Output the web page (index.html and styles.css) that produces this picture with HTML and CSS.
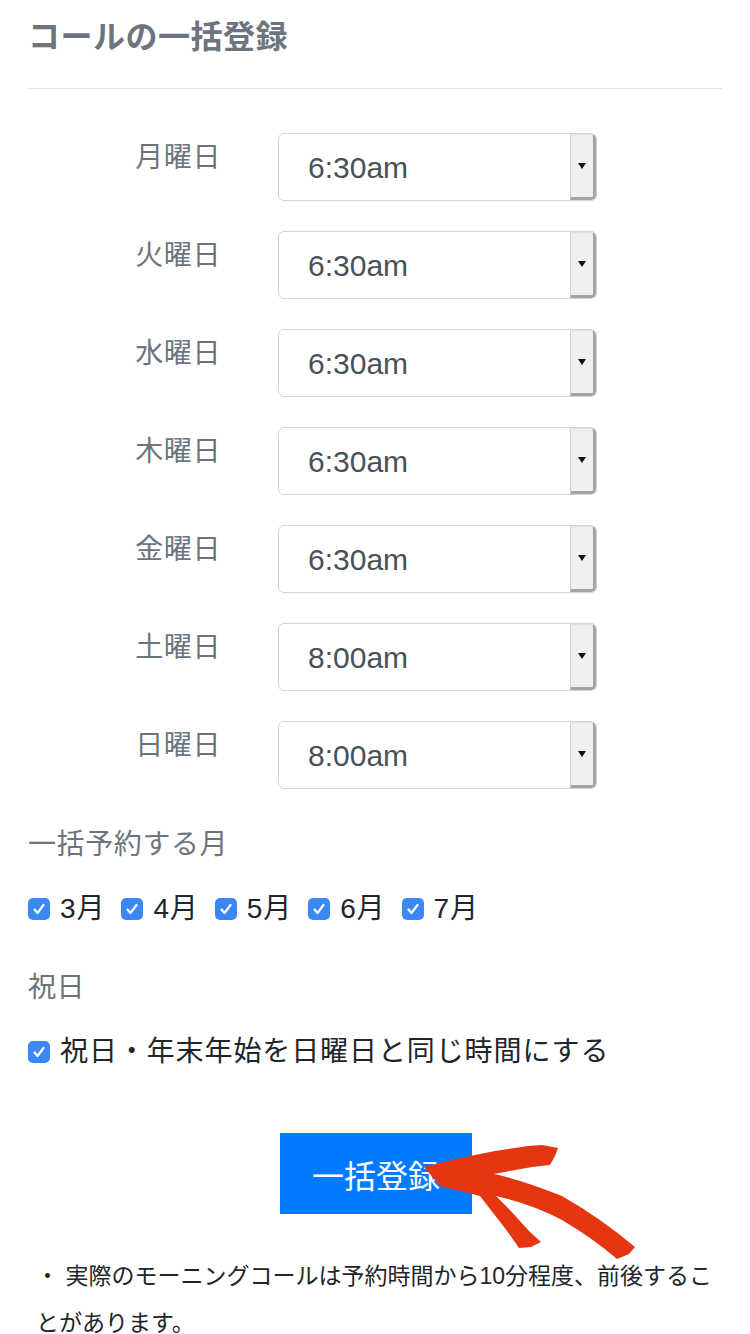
FILE: index.html
```html
<!DOCTYPE html>
<html lang="ja">
<head>
    <meta charset="UTF-8">
    <meta name="viewport" content="width=device-width, initial-scale=1.0">
    <title>コールの一括登録</title>
    <link rel="stylesheet" href="styles.css">
</head>
<body>
    <div class="page">
        <h1 class="title">コールの一括登録</h1>
        <hr class="divider">

        <div class="days">
            <div class="day-row">
                <label class="day-label">月曜日</label>
                <div class="select"><span class="select-value">6:30am</span><span class="select-btn"><i class="caret"></i></span></div>
            </div>
            <div class="day-row">
                <label class="day-label">火曜日</label>
                <div class="select"><span class="select-value">6:30am</span><span class="select-btn"><i class="caret"></i></span></div>
            </div>
            <div class="day-row">
                <label class="day-label">水曜日</label>
                <div class="select"><span class="select-value">6:30am</span><span class="select-btn"><i class="caret"></i></span></div>
            </div>
            <div class="day-row">
                <label class="day-label">木曜日</label>
                <div class="select"><span class="select-value">6:30am</span><span class="select-btn"><i class="caret"></i></span></div>
            </div>
            <div class="day-row">
                <label class="day-label">金曜日</label>
                <div class="select"><span class="select-value">6:30am</span><span class="select-btn"><i class="caret"></i></span></div>
            </div>
            <div class="day-row">
                <label class="day-label">土曜日</label>
                <div class="select"><span class="select-value">8:00am</span><span class="select-btn"><i class="caret"></i></span></div>
            </div>
            <div class="day-row">
                <label class="day-label">日曜日</label>
                <div class="select"><span class="select-value">8:00am</span><span class="select-btn"><i class="caret"></i></span></div>
            </div>
        </div>

        <p class="field-label months-label">一括予約する月</p>
        <div class="months">
            <label class="check"><span class="box"><svg viewBox="0 0 22 22"><path d="M6.5 11.5l3 3.5 6-8"/></svg></span>3月</label>
            <label class="check"><span class="box"><svg viewBox="0 0 22 22"><path d="M6.5 11.5l3 3.5 6-8"/></svg></span>4月</label>
            <label class="check"><span class="box"><svg viewBox="0 0 22 22"><path d="M6.5 11.5l3 3.5 6-8"/></svg></span>5月</label>
            <label class="check"><span class="box"><svg viewBox="0 0 22 22"><path d="M6.5 11.5l3 3.5 6-8"/></svg></span>6月</label>
            <label class="check"><span class="box"><svg viewBox="0 0 22 22"><path d="M6.5 11.5l3 3.5 6-8"/></svg></span>7月</label>
        </div>

        <p class="field-label holiday-label">祝日</p>
        <label class="check holiday-check"><span class="box"><svg viewBox="0 0 22 22"><path d="M6.5 11.5l3 3.5 6-8"/></svg></span>祝日・年末年始を日曜日と同じ時間にする</label>

        <div class="submit-wrap">
            <button class="submit" type="button">一括登録</button>
            <!-- hand drawn pointer -->
            <svg class="arrow" width="230" height="135" viewBox="0 0 230 135">
                <path d="M4 37 L40 28 L75 21 L108 16 L122 15 L138 18 L135 26 L130 35 L112 37 L95 40 L74 44
                         Q102 50 142 66 Q182 89 215 117 L209 124 L197 129
                         Q174 109 142 90 Q112 74 76 66
                         L88 78 L99 90 L110 102 L121 112 L111 117 L99 118
                         L90 105 L81 93 L70 79 L60 66 L40 61 L20 56 Z"/>
            </svg>
        </div>

        <p class="note">・ 実際のモーニングコールは予約時間から10分程度、前後することがあります。</p>
    </div>
</body>
</html>
```

FILE: styles.css
```css
body {
    margin: 0;
    background: #fff;
    font-family: "Liberation Sans", "Noto Sans CJK JP", sans-serif;
    color: #212529;
}
.page {
    padding: 0 28px;
}
.title {
    margin: 18px 0 0;
    font-size: 32px;
    line-height: 38px;
    font-weight: 700;
    letter-spacing: 0.5px;
    color: #6c757d;
}
.divider {
    margin: 32px 0 0;
    border: none;
    border-top: 1px solid #dee2e6;
}
.days {
    margin-top: 44px;
    display: flex;
    flex-direction: column;
    gap: 30px;
}
.day-row {
    display: grid;
    grid-template-columns: 250px 319px;
    align-items: start;
}
.day-label {
    padding: 4px 57px 0 0;
    text-align: right;
    font-size: 28px;
    line-height: 42px;
    letter-spacing: 0.6px;
    color: #6c757d;
}
.select {
    display: flex;
    align-items: center;
    height: 68px;
    box-sizing: border-box;
    border: 1px solid #ced4da;
    border-radius: 6px;
    background: #fff;
    overflow: hidden;
}
.select-value {
    flex: 1;
    padding: 1px 0 0 29px;
    font-family: "Liberation Sans", sans-serif;
    font-size: 30px;
    color: #495057;
}
.select-btn {
    align-self: stretch;
    width: 22px;
    display: flex;
    align-items: center;
    justify-content: center;
    background: #f0f0f0;
    border-left: 1px solid #cfcfcf;
    border-right: 3px solid #a3a3a3;
    border-bottom: 3px solid #a3a3a3;
    border-top: 1px solid #e2e2e2;
    border-radius: 0 4px 4px 0;
}
.caret {
    width: 0;
    height: 0;
    border-top: 6px solid #111;
    border-left: 4.5px solid transparent;
    border-right: 4.5px solid transparent;
}
.field-label {
    margin: 0;
    font-size: 28px;
    line-height: 42px;
    letter-spacing: 0.6px;
    color: #6c757d;
}
.months-label {
    margin-top: 35px;
}
.months {
    margin-top: 22px;
    display: flex;
    gap: 16px;
}
.check {
    display: inline-flex;
    align-items: center;
    gap: 10px;
    font-size: 28px;
    line-height: 42px;
    letter-spacing: 0.9px;
    color: #212529;
}
.box {
    width: 22px;
    height: 22px;
    border-radius: 5px;
    background: #3c87f7;
    display: inline-flex;
}
.box svg {
    width: 22px;
    height: 22px;
}
.box path {
    fill: none;
    stroke: #fff;
    stroke-width: 2.2;
    stroke-linecap: round;
    stroke-linejoin: round;
}
.holiday-label {
    margin-top: 37px;
}
.holiday-check {
    margin-top: 22px;
}
.submit-wrap {
    position: relative;
    margin-top: 60px;
    display: flex;
    justify-content: center;
}
.submit {
    width: 192px;
    height: 81px;
    margin-left: 2px;
    border: none;
    border-radius: 0;
    background: #007bff;
    color: #fff;
    font-family: "Noto Sans CJK JP", sans-serif;
    font-size: 32px;
}
.arrow {
    position: absolute;
    left: 392px;
    top: -3px;
}
.arrow path {
    fill: #e53511;
}
.note {
    margin: 39px 0 0;
    padding-left: 8px;
    font-size: 23px;
    line-height: 47px;
    color: #212529;
}
```
